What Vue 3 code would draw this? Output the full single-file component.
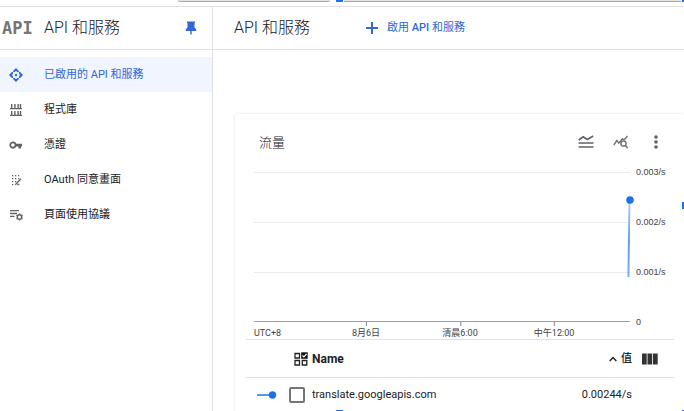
<script setup>
const nav = [
  { label: '已啟用的 API 和服務', icon: 'api', active: true },
  { label: '程式庫', icon: 'library' },
  { label: '憑證', icon: 'key' },
  { label: 'OAuth 同意畫面', icon: 'consent' },
  { label: '頁面使用協議', icon: 'agreement' },
]
const yLabels = ['0.003/s', '0.002/s', '0.001/s', '0']
const ticks = [
  { label: '8月6日', at: 29.8 },
  { label: '清晨6:00', at: 54.8 },
  { label: '中午12:00', at: 79.8 },
]
const columns = ['Name', '值']
const rows = [{ name: 'translate.googleapis.com', value: '0.00244/s' }]
</script>

<template>
  <div class="page">
    <div class="strip" aria-hidden="true">
      <span class="tab"></span>
      <span class="handle"></span>
      <span class="tab wide"></span>
      <span class="handle end"></span>
    </div>
    <div class="shell">
      <aside class="sidebar">
        <div class="bar side-head">
          <span class="logo">API</span>
          <h2 class="title">API 和服務</h2>
          <button class="icon-btn pin" aria-label="Pin">
            <svg width="12" height="14" viewBox="0 0 12 14"><path d="M2 .5h8V2H9.500v4.500l1.700 1.800V10H6.700v3L6 14l-.7-1v-3H.8V8.300l1.700-1.800V2H2z" fill="#3367d6" /></svg>
          </button>
        </div>
        <nav class="nav">
          <a v-for="n in nav" :key="n.icon" href="#" class="nav-item" :class="{ active: n.active }">
            <svg class="nav-icon" width="14" height="14" viewBox="0 0 14 14" fill="currentColor">
              <g v-if="n.icon === 'api'">
                <path d="M7 0l2.900 2.900v1.200H8.600L7 3 5.400 4.100H4.100V2.900zM7 14l2.900-2.900V9.900H8.600L7 11 5.400 9.900H4.100v1.200zM0 7l2.900-2.900h1.200v1.300L3 7l1.100 1.600v1.300H2.900zM14 7l-2.900-2.900H9.900v1.300L11 7 9.900 8.600v1.300h1.200z" />
                <circle cx="7" cy="7" r="1.200" />
              </g>
              <path v-else-if="n.icon === 'library'" d="M2 1h1.400v4h1.800V1h1.400v4h1.800V1h1.400v4h1V1h1.400v4H13v1.300H1V5h1zM2 8h1.400v3.700h1.800V8h1.400v3.700h1.800V8h1.400v3.700h1V8h1.400v3.700H13V13H1v-1.300h1z" />
              <path v-else-if="n.icon === 'key'" fill-rule="evenodd" d="M7.300 5.700a3.600 3.600 0 1 0 0 2.700H9.500v2h2.500v-2h1V5.700zM3.900 5.200a1.800 1.800 0 1 1 0 3.600 1.800 1.800 0 0 1 0-3.600z" />
              <g v-else-if="n.icon === 'consent'">
                <path d="M3 2h1.300v1.300H3zM6 2h1.300v1.300H6zM9 2h1.300v1.300H9zM3 5h1.300v1.300H3zM6 5h1.300v1.300H6zM9 5h1.300v1.300H9zM3 8h1.300v1.300H3zM6 8h1.300v1.300H6zM3 11h1.300v1.300H3z" />
                <path d="M6.300 11.700L12 5.800M8.300 11.500h2" stroke="currentColor" stroke-width="1.300" />
              </g>
              <g v-else fill="none" stroke="currentColor">
                <path d="M1 2.700h9M1 5.500h7M1 8.300h4.500" stroke-width="1.300" />
                <circle cx="10.500" cy="9" r="2.200" stroke-width="1.400" />
                <path d="M10.500 5.500v1.300M10.500 11.200v1.300M7.500 7.200l1.100.7M12.400 10.100l1.100.7M13.500 7.200l-1.100.7M8.600 10.100l-1.100.7" stroke-width="1.400" />
              </g>
            </svg>
            <span>{{ n.label }}</span>
          </a>
        </nav>
      </aside>

      <main class="main">
        <header class="bar main-head">
          <h1 class="title">API 和服務</h1>
          <button class="enable">
            <svg width="14" height="14" viewBox="0 0 14 14"><path d="M7 1v12M1 7h12" stroke="#3367d6" stroke-width="2" /></svg>
            <span>啟用 <b>API</b> 和服務</span>
          </button>
        </header>

        <section class="card">
          <div class="card-head">
            <h3 class="card-title">流量</h3>
            <div class="tools">
              <button class="icon-btn" aria-label="Chart type">
                <svg width="16" height="14" viewBox="0 0 16 14" fill="none" stroke="#5f6368" stroke-width="1.700"><path d="M.8 5l4.400-3.200 4 2.600L15.200 1M.5 8h15M.5 12h15" /></svg>
              </button>
              <button class="icon-btn" aria-label="Explore metrics">
                <svg width="16" height="14" viewBox="0 0 16 14" fill="none" stroke="#777" stroke-width="1.500"><path d="M.8 10l3-4.500 2 2.500 3.500-4 2 .7L14.500 1" /><circle cx="10.500" cy="8.500" r="2.600" /><path d="M12.300 10.500l2.500 2.800" /></svg>
              </button>
              <button class="icon-btn" aria-label="More options">
                <svg width="16" height="16" viewBox="0 0 16 16" fill="#5f6368"><circle cx="8" cy="3" r="1.800" /><circle cx="8" cy="8" r="1.800" /><circle cx="8" cy="13" r="1.800" /></svg>
              </button>
            </div>
          </div>

          <div class="chart">
            <div class="plot">
              <div class="band"></div>
              <div class="band"></div>
              <div class="band"></div>
              <svg class="series" width="8" height="84" viewBox="0 0 8 84">
                <defs>
                  <linearGradient id="trace" x1="0" y1="0" x2="0" y2="1">
                    <stop offset="0" stop-color="#a9ccfb" /><stop offset=".55" stop-color="#5a9af5" /><stop offset="1" stop-color="#78adf8" />
                  </linearGradient>
                </defs>
                <path d="M2.600 4h1.800l-1 77H1.400z" fill="url(#trace)" />
                <circle cx="4" cy="4" r="3.800" fill="#1a73e8" />
              </svg>
            </div>
            <div class="y-axis"><span v-for="y in yLabels" :key="y">{{ y }}</span></div>
            <div class="x-axis">
              <span class="zone">UTC+8</span>
              <span v-for="t in ticks" :key="t.label" class="tick" :style="{ left: t.at + '%' }">{{ t.label }}</span>
            </div>
          </div>

          <table class="legend">
            <thead>
              <tr>
                <th class="mark"></th>
                <th class="pick">
                  <svg width="14" height="14" viewBox="0 0 14 14" fill="none" stroke="#222" stroke-width="1.300"><path d="M1 1.500h4.500v4.500H1zM1 8.500h4.500V13H1zM8.300 8.500h4.500V13H8.300z" /><path d="M7.200.3h6.500v6.500H7.200z" fill="#111" stroke="none" /><path d="M8.500 3.500l1.400 1.400 2.700-3" stroke="#fff" /></svg>
                </th>
                <th class="name">{{ columns[0] }}</th>
                <th class="value">
                  <div class="sort">
                    <svg width="8" height="6" viewBox="0 0 8 6" fill="none" stroke="#222" stroke-width="1.500"><path d="M.7 5L4 1.500 7.300 5" /></svg>
                    <span>{{ columns[1] }}</span>
                  </div>
                </th>
                <th class="cols">
                  <button class="icon-btn" aria-label="Columns">
                    <svg width="16" height="12" viewBox="0 0 16 12" fill="#333"><path d="M0 .5h4.700v11H0zM5.500.5h4.700v11H5.500zM11 .5h4.700v11H11z" /></svg>
                  </button>
                </th>
              </tr>
            </thead>
            <tbody>
              <tr v-for="r in rows" :key="r.name">
                <td class="mark"><svg width="20" height="8" viewBox="0 0 20 8"><path d="M0 4h12" stroke="#1a73e8" stroke-width="1.500" /><circle cx="15.500" cy="4" r="3.700" fill="#1a73e8" /></svg></td>
                <td class="pick"><input id="series-pick" type="checkbox" /></td>
                <td class="name"><label for="series-pick">{{ r.name }}</label></td>
                <td class="value">{{ r.value }}</td>
                <td class="cols"></td>
              </tr>
            </tbody>
          </table>
        </section>
      </main>
    </div>
    <span class="grip right"></span>
    <span class="grip bottom"></span>
    <span class="grip corner"></span>
  </div>
</template>

<style>
html, body { height: 100%; overflow: hidden; }
#app { height: 100%; }
</style>

<style scoped>
* { box-sizing: border-box; }
.page {
  position: relative;
  height: 100%;
  display: flex;
  flex-direction: column;
  overflow: hidden;
  background: #fff;
  color: #202124;
  font: 12px/16px Roboto, "Noto Sans CJK TC", sans-serif;
}
h1, h2, h3 { margin: 0; font-weight: 400; }
button { display: block; border: 0; padding: 0; background: none; font: inherit; }
svg { display: block; flex: none; }
.strip { display: flex; align-items: flex-start; height: 7px; padding-left: 178px; border-bottom: 1px solid #e0e0e0; }
.tab { width: 152px; height: 2px; background: #e4e4e4; border-bottom: 1px solid #a8a8a8; border-radius: 0 0 3px 3px; }
.handle { width: 7px; height: 2px; margin: 0 1px 0 6px; background: #1a73e8; }
.handle.end { width: 2px; margin: 0 0 0 1px; }
.tab.wide { flex: 1; border-radius: 0; }
.shell { flex: 1; display: flex; min-height: 0; }
.sidebar { width: 213px; flex: none; border-right: 1px solid #e0e0e0; }
.main { flex: 1; min-width: 0; }
.bar { display: flex; align-items: center; height: 43px; border-bottom: 1px solid #e0e0e0; }
.title { font-size: 16px; line-height: 20px; font-weight: 300; }
.side-head { padding: 0 15px 0 2px; }
.logo { width: 42px; font: bold 17px/20px "DejaVu Sans Mono", monospace; color: #757575; }
.pin { margin-left: auto; }
.nav { padding-top: 7px; }
.nav-item { display: flex; align-items: center; gap: 21px; height: 35px; padding-left: 9px; color: #202124; font-size: 11px; line-height: 17px; text-decoration: none; }
.nav-icon { color: #5f6368; }
.nav-item.active { background: #f0f5ff; color: #3367d6; }
.nav-item.active .nav-icon { color: #3367d6; }
.main-head { gap: 55px; padding-left: 21px; }
.enable { display: flex; align-items: center; gap: 8px; color: #3367d6; font-size: 11px; }
.enable b { font-weight: 500; }
.card { margin: 64px 0 0 22px; padding: 0 10px 0 11px; border-radius: 3px; box-shadow: 0 0 3px rgba(0, 0, 0, .12); }
.card-head { display: flex; align-items: center; justify-content: space-between; height: 58px; padding: 0 10px 0 13px; }
.card-title { font-size: 13px; font-weight: 300; }
.tools { display: flex; align-items: center; gap: 19px; padding-bottom: 2px; }
.chart { display: grid; grid-template-columns: 1fr 38px; column-gap: 6px; padding-left: 8px; }
.plot { position: relative; }
.band { height: 50px; border-top: 1px solid #ebebeb; }
.band:nth-child(3) { border-bottom: 1px solid #9aa0a6; }
.series { position: absolute; right: -4px; top: 24px; }
.y-axis { display: flex; flex-direction: column; justify-content: space-between; margin: -5px 0; font: 9px/10px "Liberation Sans", sans-serif; color: #444; }
.x-axis { position: relative; height: 17px; font-size: 9px; line-height: 10px; color: #444; }
.zone { display: block; padding-top: 6px; }
.tick { position: absolute; top: 0; padding-top: 6px; transform: translateX(-50%); white-space: nowrap; }
.tick::before { content: ""; position: absolute; left: 50%; top: 0; height: 4px; border-left: 1px solid #80868b; }
.legend { width: 100%; border-collapse: collapse; table-layout: fixed; color: #202124; }
.legend tr { height: 38px; border-top: 1px solid #e0e0e0; }
.legend tbody tr { height: 34px; }
th, td { padding: 0; text-align: left; vertical-align: middle; }
th { font-size: 12px; line-height: 16px; }
td { font-size: 11px; line-height: 16px; }
.mark { width: 43px; padding-left: 11px; }
.pick { width: 23px; }
th.pick { padding-left: 5px; }
.value { width: 90px; text-align: right; }
.sort { display: flex; align-items: center; justify-content: flex-end; gap: 4px; font-size: 11px; font-weight: 500; }
.cols { width: 42px; padding-left: 10px; }
input { display: block; appearance: none; width: 16px; height: 16px; margin: 0; border: 2px solid #757575; border-radius: 2px; background: #fff; }
.grip { position: absolute; background: #1a73e8; }
.right { right: 0; top: 202px; width: 2px; height: 7px; }
.bottom { left: 336px; bottom: 0; width: 7px; height: 1px; }
.corner { right: 0; bottom: 0; width: 2px; height: 1px; }
</style>
